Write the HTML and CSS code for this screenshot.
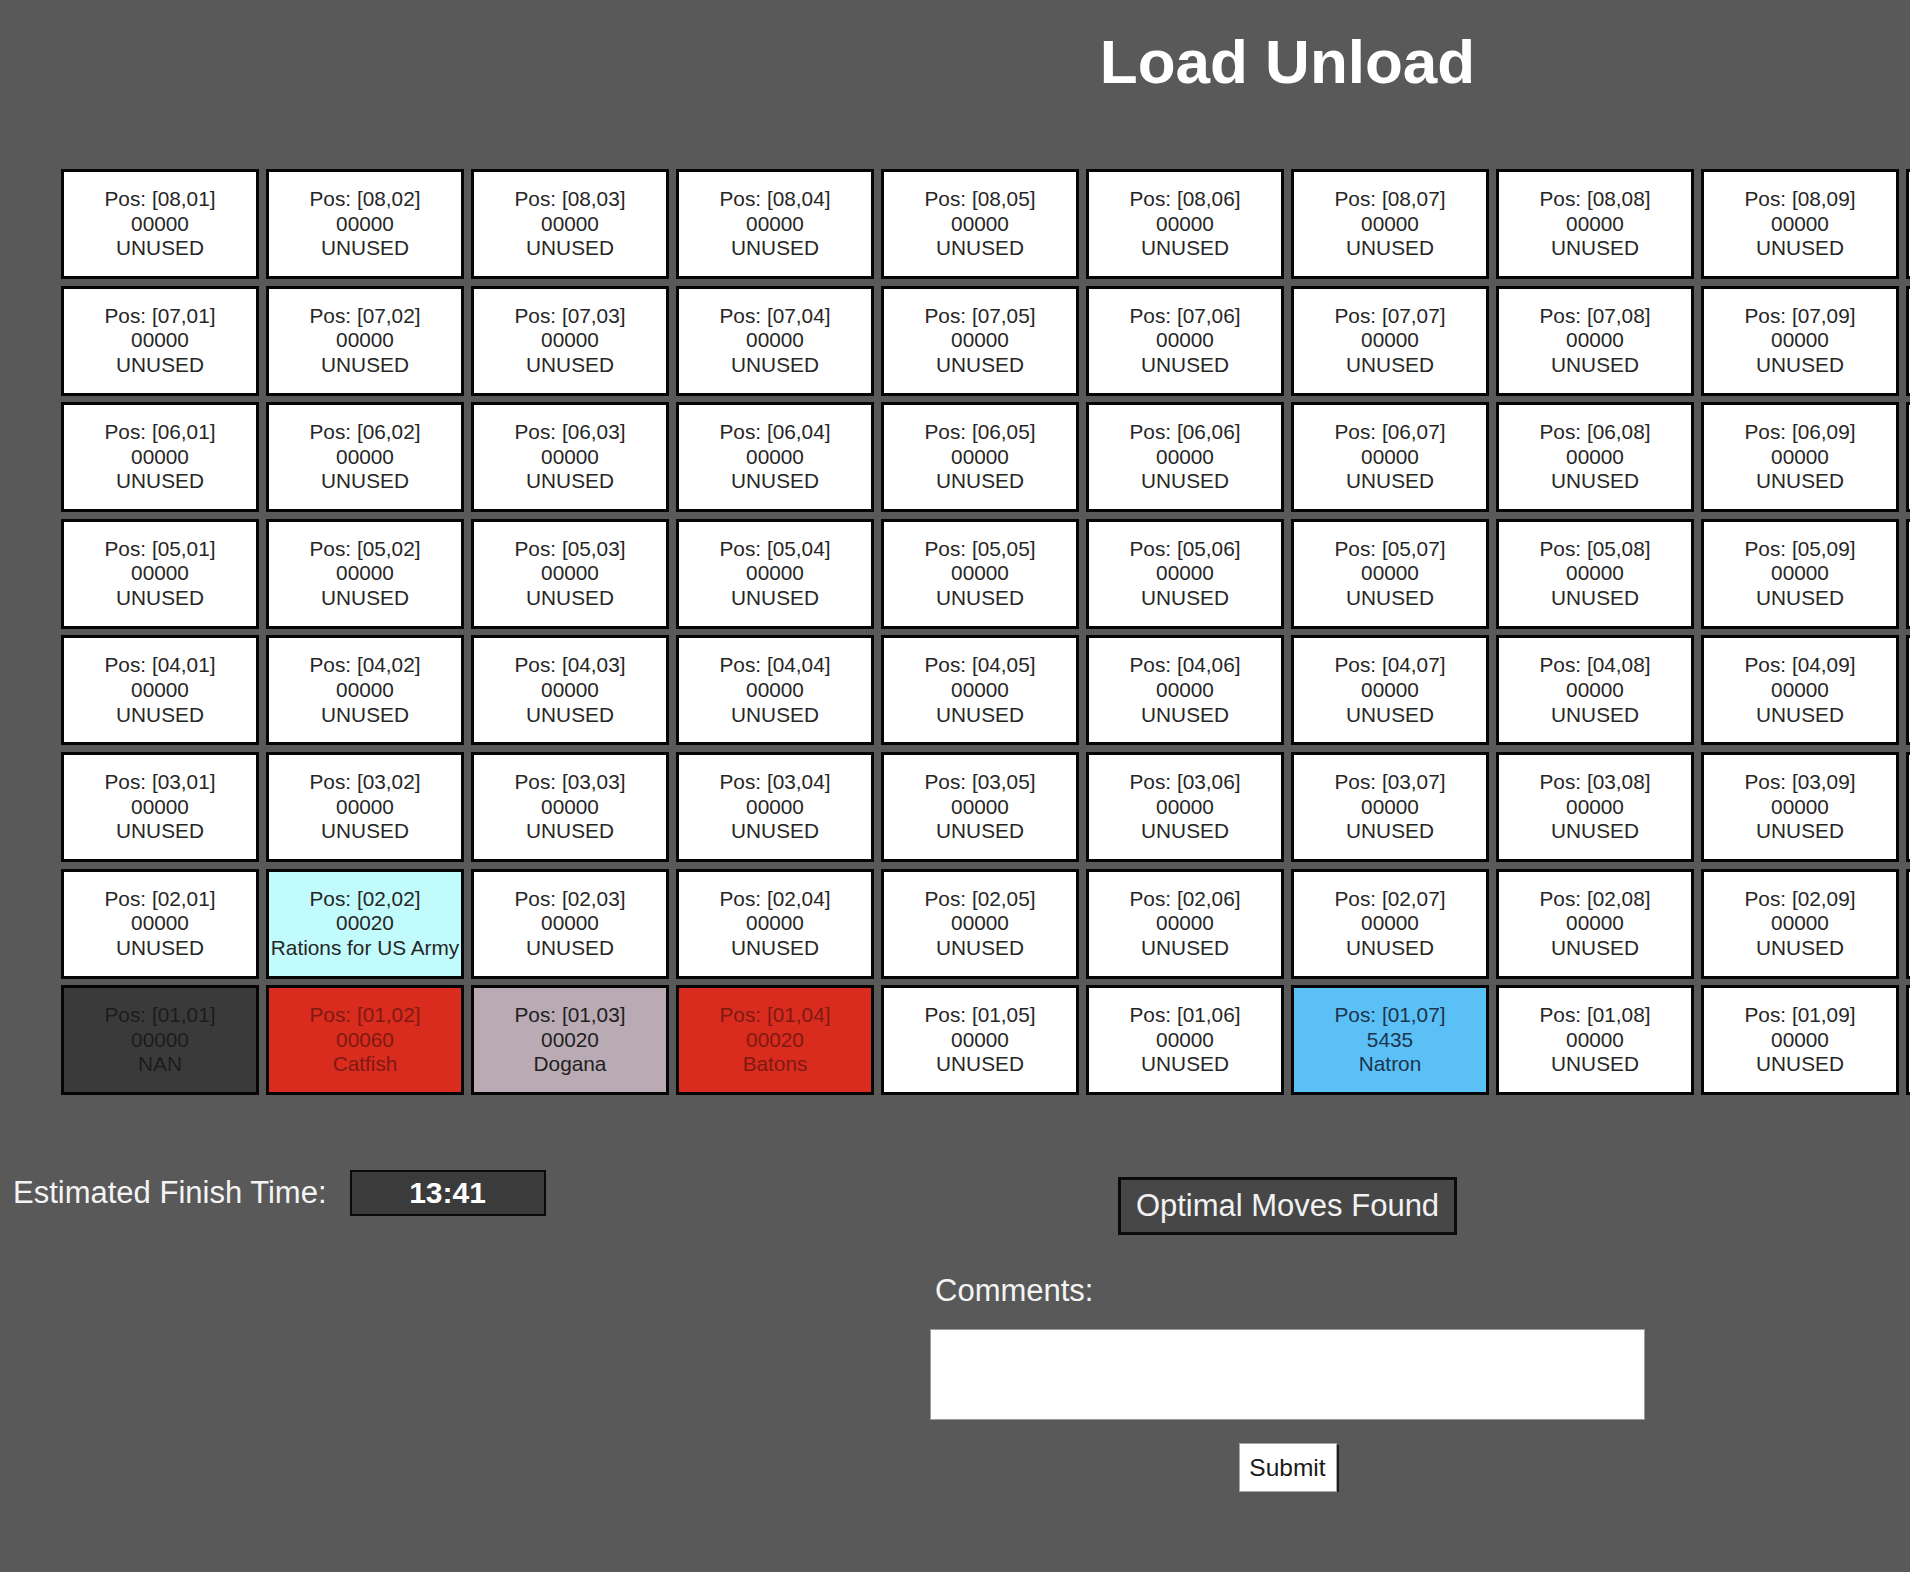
FILE: index.html
```html
<!DOCTYPE html>
<html lang="en">
<head>
<meta charset="utf-8">
<title>Load Unload</title>
<link rel="stylesheet" href="styles.css">
</head>
<body>
<div class="page">
  <h1 class="title">Load Unload</h1>
  <div class="grid">
    <div class="tile">Pos: [08,01]<br>00000<br>UNUSED</div>
    <div class="tile">Pos: [08,02]<br>00000<br>UNUSED</div>
    <div class="tile">Pos: [08,03]<br>00000<br>UNUSED</div>
    <div class="tile">Pos: [08,04]<br>00000<br>UNUSED</div>
    <div class="tile">Pos: [08,05]<br>00000<br>UNUSED</div>
    <div class="tile">Pos: [08,06]<br>00000<br>UNUSED</div>
    <div class="tile">Pos: [08,07]<br>00000<br>UNUSED</div>
    <div class="tile">Pos: [08,08]<br>00000<br>UNUSED</div>
    <div class="tile">Pos: [08,09]<br>00000<br>UNUSED</div>
    <div class="tile">Pos: [08,10]<br>00000<br>UNUSED</div>
    <div class="tile">Pos: [08,11]<br>00000<br>UNUSED</div>
    <div class="tile">Pos: [08,12]<br>00000<br>UNUSED</div>

    <div class="tile">Pos: [07,01]<br>00000<br>UNUSED</div>
    <div class="tile">Pos: [07,02]<br>00000<br>UNUSED</div>
    <div class="tile">Pos: [07,03]<br>00000<br>UNUSED</div>
    <div class="tile">Pos: [07,04]<br>00000<br>UNUSED</div>
    <div class="tile">Pos: [07,05]<br>00000<br>UNUSED</div>
    <div class="tile">Pos: [07,06]<br>00000<br>UNUSED</div>
    <div class="tile">Pos: [07,07]<br>00000<br>UNUSED</div>
    <div class="tile">Pos: [07,08]<br>00000<br>UNUSED</div>
    <div class="tile">Pos: [07,09]<br>00000<br>UNUSED</div>
    <div class="tile">Pos: [07,10]<br>00000<br>UNUSED</div>
    <div class="tile">Pos: [07,11]<br>00000<br>UNUSED</div>
    <div class="tile">Pos: [07,12]<br>00000<br>UNUSED</div>

    <div class="tile">Pos: [06,01]<br>00000<br>UNUSED</div>
    <div class="tile">Pos: [06,02]<br>00000<br>UNUSED</div>
    <div class="tile">Pos: [06,03]<br>00000<br>UNUSED</div>
    <div class="tile">Pos: [06,04]<br>00000<br>UNUSED</div>
    <div class="tile">Pos: [06,05]<br>00000<br>UNUSED</div>
    <div class="tile">Pos: [06,06]<br>00000<br>UNUSED</div>
    <div class="tile">Pos: [06,07]<br>00000<br>UNUSED</div>
    <div class="tile">Pos: [06,08]<br>00000<br>UNUSED</div>
    <div class="tile">Pos: [06,09]<br>00000<br>UNUSED</div>
    <div class="tile">Pos: [06,10]<br>00000<br>UNUSED</div>
    <div class="tile">Pos: [06,11]<br>00000<br>UNUSED</div>
    <div class="tile">Pos: [06,12]<br>00000<br>UNUSED</div>

    <div class="tile">Pos: [05,01]<br>00000<br>UNUSED</div>
    <div class="tile">Pos: [05,02]<br>00000<br>UNUSED</div>
    <div class="tile">Pos: [05,03]<br>00000<br>UNUSED</div>
    <div class="tile">Pos: [05,04]<br>00000<br>UNUSED</div>
    <div class="tile">Pos: [05,05]<br>00000<br>UNUSED</div>
    <div class="tile">Pos: [05,06]<br>00000<br>UNUSED</div>
    <div class="tile">Pos: [05,07]<br>00000<br>UNUSED</div>
    <div class="tile">Pos: [05,08]<br>00000<br>UNUSED</div>
    <div class="tile">Pos: [05,09]<br>00000<br>UNUSED</div>
    <div class="tile">Pos: [05,10]<br>00000<br>UNUSED</div>
    <div class="tile">Pos: [05,11]<br>00000<br>UNUSED</div>
    <div class="tile">Pos: [05,12]<br>00000<br>UNUSED</div>

    <div class="tile">Pos: [04,01]<br>00000<br>UNUSED</div>
    <div class="tile">Pos: [04,02]<br>00000<br>UNUSED</div>
    <div class="tile">Pos: [04,03]<br>00000<br>UNUSED</div>
    <div class="tile">Pos: [04,04]<br>00000<br>UNUSED</div>
    <div class="tile">Pos: [04,05]<br>00000<br>UNUSED</div>
    <div class="tile">Pos: [04,06]<br>00000<br>UNUSED</div>
    <div class="tile">Pos: [04,07]<br>00000<br>UNUSED</div>
    <div class="tile">Pos: [04,08]<br>00000<br>UNUSED</div>
    <div class="tile">Pos: [04,09]<br>00000<br>UNUSED</div>
    <div class="tile">Pos: [04,10]<br>00000<br>UNUSED</div>
    <div class="tile">Pos: [04,11]<br>00000<br>UNUSED</div>
    <div class="tile">Pos: [04,12]<br>00000<br>UNUSED</div>

    <div class="tile">Pos: [03,01]<br>00000<br>UNUSED</div>
    <div class="tile">Pos: [03,02]<br>00000<br>UNUSED</div>
    <div class="tile">Pos: [03,03]<br>00000<br>UNUSED</div>
    <div class="tile">Pos: [03,04]<br>00000<br>UNUSED</div>
    <div class="tile">Pos: [03,05]<br>00000<br>UNUSED</div>
    <div class="tile">Pos: [03,06]<br>00000<br>UNUSED</div>
    <div class="tile">Pos: [03,07]<br>00000<br>UNUSED</div>
    <div class="tile">Pos: [03,08]<br>00000<br>UNUSED</div>
    <div class="tile">Pos: [03,09]<br>00000<br>UNUSED</div>
    <div class="tile">Pos: [03,10]<br>00000<br>UNUSED</div>
    <div class="tile">Pos: [03,11]<br>00000<br>UNUSED</div>
    <div class="tile">Pos: [03,12]<br>00000<br>UNUSED</div>

    <div class="tile">Pos: [02,01]<br>00000<br>UNUSED</div>
    <div class="tile tile-cyan">Pos: [02,02]<br>00020<br>Rations for US Army</div>
    <div class="tile">Pos: [02,03]<br>00000<br>UNUSED</div>
    <div class="tile">Pos: [02,04]<br>00000<br>UNUSED</div>
    <div class="tile">Pos: [02,05]<br>00000<br>UNUSED</div>
    <div class="tile">Pos: [02,06]<br>00000<br>UNUSED</div>
    <div class="tile">Pos: [02,07]<br>00000<br>UNUSED</div>
    <div class="tile">Pos: [02,08]<br>00000<br>UNUSED</div>
    <div class="tile">Pos: [02,09]<br>00000<br>UNUSED</div>
    <div class="tile">Pos: [02,10]<br>00000<br>UNUSED</div>
    <div class="tile">Pos: [02,11]<br>00000<br>UNUSED</div>
    <div class="tile">Pos: [02,12]<br>00000<br>UNUSED</div>

    <div class="tile tile-dark">Pos: [01,01]<br>00000<br>NAN</div>
    <div class="tile tile-red">Pos: [01,02]<br>00060<br>Catfish</div>
    <div class="tile tile-mauve">Pos: [01,03]<br>00020<br>Dogana</div>
    <div class="tile tile-red">Pos: [01,04]<br>00020<br>Batons</div>
    <div class="tile">Pos: [01,05]<br>00000<br>UNUSED</div>
    <div class="tile">Pos: [01,06]<br>00000<br>UNUSED</div>
    <div class="tile tile-blue">Pos: [01,07]<br>5435<br>Natron</div>
    <div class="tile">Pos: [01,08]<br>00000<br>UNUSED</div>
    <div class="tile">Pos: [01,09]<br>00000<br>UNUSED</div>
    <div class="tile">Pos: [01,10]<br>00000<br>UNUSED</div>
    <div class="tile">Pos: [01,11]<br>00000<br>UNUSED</div>
    <div class="tile">Pos: [01,12]<br>00000<br>UNUSED</div>
  </div>

  <div class="status-row">
    <div class="eta">
      <span class="eta-label">Estimated Finish Time:</span>
      <span class="eta-value">13:41</span>
    </div>
    <div class="optimal">Optimal Moves Found</div>
  </div>

  <form class="comments">
    <label class="comments-label" for="comments">Comments:</label>
    <textarea class="comments-box" id="comments"></textarea>
    <button class="submit" type="button">Submit</button>
  </form>
</div>
</body>
</html>
```

FILE: styles.css
```css
html {
  background: #595959;
  overflow: hidden;
}

body {
  margin: 0;
  font-family: "Liberation Sans", Arial, sans-serif;
  color: #f4f4f4;
}

.page {
  width: 2575px;
  padding-top: 31px;
}

.title {
  margin: 0;
  font-size: 62px;
  line-height: 62px;
  font-weight: 700;
  text-align: center;
  color: #ffffff;
}

.grid {
  margin: 76px 61px 0;
  display: grid;
  grid-template-columns: repeat(12, 198px);
  grid-auto-rows: 110px;
  column-gap: 7px;
  row-gap: 6.6px;
}

.tile {
  box-sizing: border-box;
  border: 3px solid #050505;
  background: #ffffff;
  color: #262626;
  font-size: 20.8px;
  line-height: 24.6px;
  text-align: center;
  display: flex;
  align-items: center;
  justify-content: center;
  white-space: nowrap;
}

.tile-cyan {
  background: #c2fbfb;
}

.tile-dark {
  background: #3a3a3a;
  color: #1c1c1c;
}

.tile-red {
  background: #d92c1f;
  color: #7e1a12;
}

.tile-mauve {
  background: #b9aab4;
  color: #1f1f1f;
}

.tile-blue {
  background: #5bc0f5;
  color: #1d344e;
}

.status-row {
  margin-top: 75px;
  display: grid;
  grid-template-columns: 1fr auto 1fr;
  align-items: start;
}

.eta {
  justify-self: start;
  padding-left: 13px;
  display: flex;
  align-items: center;
  gap: 23px;
}

.eta-label {
  font-size: 31px;
  line-height: 34px;
  color: #f4f4f4;
}

.eta-value {
  box-sizing: border-box;
  width: 196px;
  height: 46px;
  border: 2px solid #0a0a0a;
  background: #3b3b3b;
  color: #ffffff;
  font-size: 30px;
  font-weight: 700;
  line-height: 42px;
  text-align: center;
}

.optimal {
  margin-top: 7px;
  box-sizing: border-box;
  height: 58px;
  padding: 0 15px;
  border: 3px solid #0a0a0a;
  background: #474747;
  color: #f2f2f2;
  font-size: 31px;
  line-height: 52px;
}

.comments {
  width: 715px;
  margin: 39px auto 0;
  display: flex;
  flex-direction: column;
}

.comments-label {
  font-size: 31px;
  line-height: 34px;
  color: #f4f4f4;
  padding-left: 5px;
}

.comments-box {
  display: block;
  box-sizing: border-box;
  margin: 21px 0 0;
  width: 715px;
  height: 91px;
  border: 1px solid #9c9c9c;
  background: #ffffff;
  resize: none;
  padding: 4px;
  font-family: "Liberation Sans", Arial, sans-serif;
}

.submit {
  align-self: center;
  margin-top: 23px;
  box-sizing: border-box;
  width: 98px;
  height: 49px;
  padding: 0;
  border: 1px solid #a8a8a8;
  background: #ffffff;
  box-shadow: 2px 2px 0 #1e1e1e;
  color: #1a1a1a;
  font-family: "Liberation Sans", Arial, sans-serif;
  font-size: 24.5px;
  line-height: 47px;
}
```
